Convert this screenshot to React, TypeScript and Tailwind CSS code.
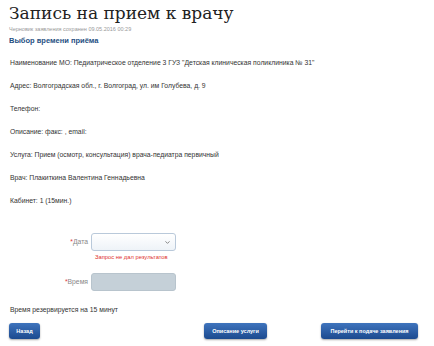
import { ChevronDown } from "lucide-react";

const rows = [
  'Наименование МО: Педиатрическое отделение 3 ГУЗ "Детская клиническая поликлиника № 31"',
  "Адрес: Волгоградская обл., г. Волгоград, ул. им Голубева, д. 9",
  "Телефон:",
  "Описание: факс: , email:",
  "Услуга: Прием (осмотр, консультация) врача-педиатра первичный",
  "Врач: Плакиткина Валентина Геннадьевна",
  "Кабинет: 1 (15мин.)",
];

const btn =
  "h-4 whitespace-nowrap rounded-[3px] bg-gradient-to-b from-[#3f74bd] to-[#1c4a8f] px-1 text-[5.5px] font-bold text-white shadow-[0_1px_2px_rgba(0,0,0,0.35)]";

export default function App() {
  return (
    <div className="h-[346px] w-[434px] bg-white px-[9px] pt-[2px] font-['Liberation_Sans',Arial,sans-serif] text-[#333]">
      {/* Заголовок */}
      <h1 className="font-['DejaVu_Serif','Liberation_Serif',serif] text-[17px] font-normal leading-[22px] text-[#222]">
        Запись на прием к врачу
      </h1>
      <p className="mt-[1px] text-[5.5px] leading-[8px] text-[#999]">
        Черновик заявления сохранен 09.05.2016 00:29
      </p>
      <h2 className="mt-[3px] text-[7.5px] font-bold leading-[10px] text-[#1f4f82]">
        Выбор времени приёма
      </h2>

      {/* Информация */}
      <div className="mt-[12px] flex flex-col gap-[14px] pl-[1px] text-[6.8px] leading-[9px]">
        {rows.map((r) => (
          <p key={r}>{r}</p>
        ))}
      </div>

      {/* Форма */}
      <div className="mt-[28px] flex flex-col">
        <div className="flex items-center">
          <span className="w-[82px] pr-[3px] text-right text-[6.8px] text-[#888]">
            <span className="text-[#e23a3a]">*</span>Дата
          </span>
          <div className="flex h-[18px] w-[85px] items-center justify-end rounded-[3px] border border-[#b9c9da] bg-gradient-to-b from-white to-[#eef3f8] pr-[4px]">
            <ChevronDown size={7} strokeWidth={3} className="text-[#777]" />
          </div>
        </div>
        <p className="ml-[86px] mt-[2px] text-[5.8px] leading-[8px] text-[#e0312b]">
          Запрос не дал результатов
        </p>
        <div className="mt-[12px] flex items-center">
          <span className="w-[82px] pr-[3px] text-right text-[6.8px] text-[#888]">
            <span className="text-[#e23a3a]">*</span>Время
          </span>
          <div className="h-[18px] w-[85px] rounded-[3px] border border-[#b8c4cd] bg-[#c5d0d8]" />
        </div>
      </div>

      <p className="mt-[14px] pl-[1px] text-[6.8px] leading-[9px]">
        Время резервируется на 15 минут
      </p>

      {/* Кнопки */}
      <div className="mt-[9px] flex items-center justify-between pr-[7px]">
        <button className={btn + " w-[31px]"}>Назад</button>
        <button className={btn + " ml-[110px] w-[63px]"}>Описание услуги</button>
        <button className={btn + " w-[97px]"}>Перейти к подаче заявления</button>
      </div>
    </div>
  );
}
